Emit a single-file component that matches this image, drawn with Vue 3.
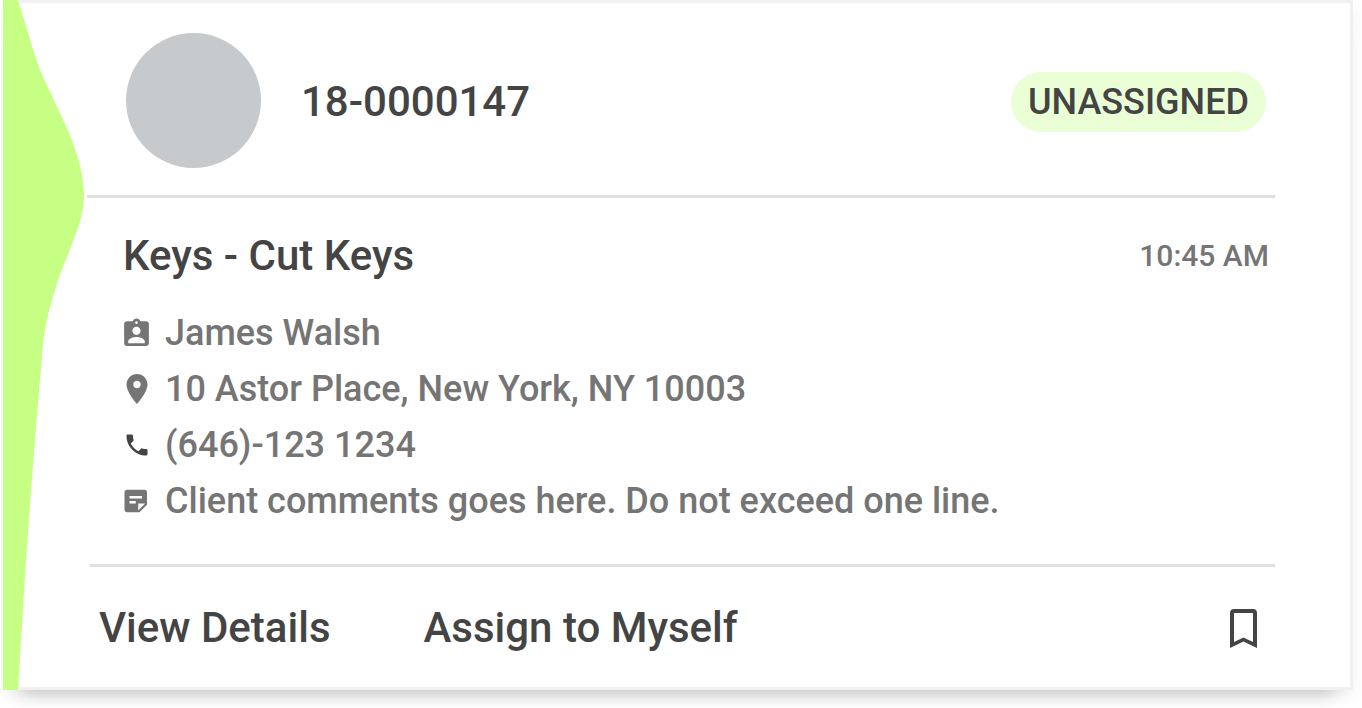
<script setup>
const ticket = {
  number: '18-0000147',
  status: 'UNASSIGNED',
  title: 'Keys - Cut Keys',
  time: '10:45 AM',
}

const details = [
  {
    text: 'James Walsh',
    size: 33,
    tone: 'muted',
    path: 'M19 3h-4.18C14.4 1.84 13.3 1 12 1c-1.3 0-2.4.84-2.82 2H5c-1.1 0-2 .9-2 2v14c0 1.100.9 2 2 2h14c1.100 0 2-.9 2-2V5c0-1.100-.9-2-2-2zm-7 0c.55 0 1 .45 1 1s-.45 1-1 1-1-.45-1-1 .45-1 1-1zm0 4c1.660 0 3 1.340 3 3s-1.340 3-3 3-3-1.340-3-3 1.340-3 3-3zm6 12H6v-1.400c0-2 4-3.100 6-3.100s6 1.100 6 3.100V19z',
  },
  {
    text: '10 Astor Place, New York, NY 10003',
    size: 36,
    tone: 'muted',
    path: 'M12 2C8.130 2 5 5.130 5 9c0 5.250 7 13 7 13s7-7.750 7-13c0-3.870-3.130-7-7-7zm0 9.500c-1.380 0-2.500-1.120-2.500-2.500s1.120-2.500 2.500-2.500 2.500 1.120 2.500 2.500-1.120 2.500-2.500 2.500z',
  },
  {
    text: '(646)-123 1234',
    size: 28,
    tone: 'strong',
    path: 'M6.620 10.790c1.440 2.830 3.760 5.140 6.590 6.590l2.200-2.200c.27-.27.67-.36 1.020-.24 1.120.37 2.330.57 3.570.57.55 0 1 .45 1 1V20c0 .55-.45 1-1 1-9.390 0-17-7.610-17-17 0-.55.45-1 1-1h3.500c.55 0 1 .45 1 1 0 1.250.2 2.450.57 3.570.11.35.03.74-.25 1.020l-2.200 2.200z',
  },
  {
    text: 'Client comments goes here. Do not exceed one line.',
    size: 30,
    tone: 'muted',
    path: 'M18 3H3.990C2.890 3 2 3.900 2 5v14c0 1.100.89 2 1.990 2H14l6-6V5c0-1.100-.9-2-2-2zM6 8h10v2H6V8zm5 6H6v-2h5v2zm2 5.500V14h5.500L13 19.500z',
  },
]
</script>

<template>
  <article class="card">
    <svg class="wave" viewBox="0 0 81 690" preserveAspectRatio="none" aria-hidden="true">
      <path d="M0 0H15L30 49C34 62 37 71 43 83L54 107C69 137 81 168 81 196C81 216 72 236 64 257C58 271 53 285 49 300C43 320 40 338 39 358C33 424 28 490 23 560L15 690H0Z" />
    </svg>

    <div class="content">
      <header class="head">
        <span class="avatar"></span>
        <h1 class="heading">{{ ticket.number }}</h1>
        <span class="badge">{{ ticket.status }}</span>
      </header>

      <section class="body">
        <div class="title-row">
          <h2 class="heading">{{ ticket.title }}</h2>
          <time class="time">{{ ticket.time }}</time>
        </div>
        <ul class="details">
          <li v-for="d in details" :key="d.text" class="detail">
            <span class="icon-box">
              <svg :class="d.tone" :width="d.size" :height="d.size" viewBox="0 0 24 24" aria-hidden="true">
                <path :d="d.path" />
              </svg>
            </span>
            <span>{{ d.text }}</span>
          </li>
        </ul>
      </section>

      <footer class="actions">
        <button type="button" class="action">View Details</button>
        <button type="button" class="action">Assign to Myself</button>
        <button type="button" class="bookmark" aria-label="Bookmark">
          <svg width="27" height="39" viewBox="0 0 27 39" aria-hidden="true">
            <path fill-rule="evenodd" d="M4 0H23Q27 0 27 4V39L13.500 32.500L0 39V4Q0 0 4 0ZM4 4V33L13.500 28.500L23 33V4Z" />
          </svg>
        </button>
      </footer>
    </div>
  </article>
</template>

<style>
body {
  margin: 0;
  background: #fff;
}
</style>

<style scoped>
.card {
  position: relative;
  box-sizing: border-box;
  margin: 0 9px 18px 3px;
  border: solid #f1f1f1;
  border-width: 3px 3px 3px 0;
  background: #fff;
  box-shadow: 0 20px 18px -18px rgba(0, 0, 0, 0.25), 0 6px 15px rgba(0, 0, 0, 0.05);
  font-family: Roboto, "Liberation Sans", sans-serif;
  font-weight: 500;
  color: #444;
}

.wave {
  position: absolute;
  top: -3px;
  left: 0;
  width: 81px;
  height: calc(100% + 6px);
  fill: #c6ff83;
}

.content {
  padding: 0 75px 0 84px;
}

.head {
  display: flex;
  align-items: center;
  gap: 40px;
  padding: 30px 9px 24px 39px;
  border-bottom: 3px solid #e0e0e0;
}

.avatar {
  width: 135px;
  height: 135px;
  margin-bottom: 3px;
  border-radius: 50%;
  background: #c6cacd;
}

.heading {
  margin: 0;
  font-size: 42px;
  line-height: 48px;
  font-weight: 500;
}

.badge {
  margin-left: auto;
  padding: 0 17px;
  border-radius: 30px;
  background: #ebffd6;
  font-size: 36px;
  line-height: 60px;
}

.body {
  padding: 34px 6px 35px 36px;
}

.title-row {
  display: flex;
  align-items: center;
  justify-content: space-between;
}

.time {
  font-size: 30px;
  line-height: 48px;
  color: #757575;
}

.details {
  margin: 25px 0 0;
  padding: 0;
  list-style: none;
}

.detail {
  display: flex;
  align-items: center;
  gap: 9px;
  margin-left: -6px;
  font-size: 36px;
  line-height: 56px;
  color: #757575;
}

.icon-box {
  display: flex;
  justify-content: center;
  width: 39px;
}

.muted {
  fill: #757575;
}

.strong {
  fill: #444;
}

.actions {
  display: flex;
  align-items: center;
  gap: 93px;
  margin-left: 3px;
  padding: 37px 18px 35px 9px;
  border-top: 3px solid #e0e0e0;
}

.action,
.bookmark {
  padding: 0;
  border: 0;
  background: none;
  color: inherit;
  font: inherit;
  cursor: pointer;
}

.action {
  font-size: 42px;
  line-height: 48px;
}

.bookmark {
  display: flex;
  margin-left: auto;
  fill: #444;
}
</style>
